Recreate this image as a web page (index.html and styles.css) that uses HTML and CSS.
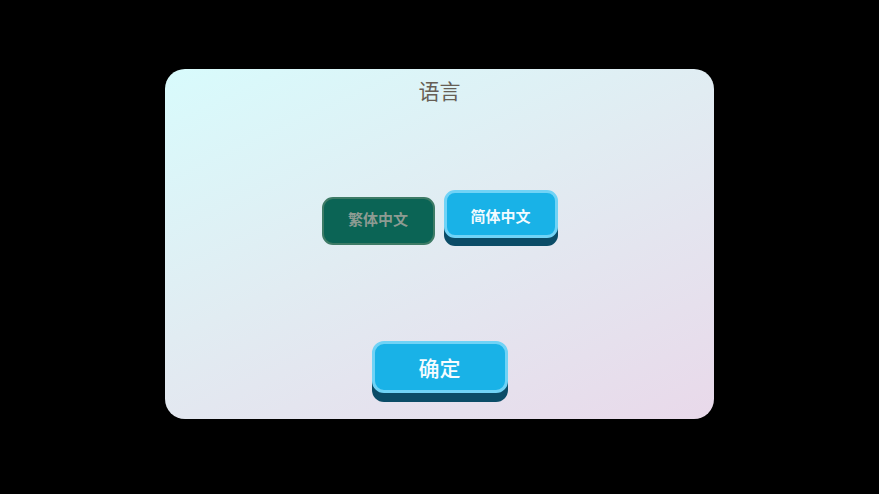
FILE: index.html
```html
<!DOCTYPE html>
<html lang="zh-CN">
<head>
<meta charset="utf-8">
<title>语言</title>
<link rel="stylesheet" href="styles.css">
</head>
<body>
<div class="panel">
  <div class="title">语言</div>
  <div class="lang-row">
    <button class="btn lang pressed">繁体中文</button>
    <button class="btn lang">简体中文</button>
  </div>
  <button class="btn confirm">确定</button>
</div>
</body>
</html>
```
FILE: styles.css
```css
html, body {
  margin: 0;
  padding: 0;
  background: #000;
  width: 879px;
  height: 494px;
  overflow: hidden;
  font-family: "Noto Sans CJK SC", "Noto Sans", sans-serif;
}
.panel {
  box-sizing: border-box;
  width: 549px;
  height: 350px;
  margin: 69px auto 0;
  border-radius: 20px;
  background: linear-gradient(155deg, #d8fbfc 0%, #e1ecf2 45%, #e9d9ea 100%);
  display: flex;
  flex-direction: column;
  align-items: center;
  padding-top: 7px;
}
.title {
  font-size: 21px;
  line-height: 28px;
  color: #675e55;
  font-weight: 400;
}
.lang-row {
  display: flex;
  gap: 9px;
  margin-top: 86px;
  align-items: flex-start;
}
.btn {
  box-sizing: border-box;
  font-family: inherit;
  font-weight: bold;
  border-style: solid;
  padding: 0;
  cursor: pointer;
}
.lang {
  width: 114px;
  height: 48px;
  border-radius: 11px;
  border-width: 3px;
  border-color: #70d3f6;
  background: #19b2e7;
  color: #f2fbff;
  font-size: 15px;
  padding-top: 4px;
  line-height: 36px;
  box-shadow: 0 8px 0 #0b4c67;
}
.lang.pressed {
  width: 113px;
  margin-top: 7px;
  border-width: 2px;
  border-color: #3e7b66;
  background: #0b6455;
  color: #8d9b92;
  box-shadow: none;
  padding-top: 0;
  padding-bottom: 5px;
  line-height: 39px;
}
.confirm {
  width: 136px;
  height: 52px;
  margin-top: 96px;
  border-radius: 12px;
  border-width: 3px;
  border-color: #70d3f6;
  background: #19b2e7;
  color: #f6fcff;
  font-size: 21px;
  font-weight: 500;
  line-height: 44px;
  box-shadow: 0 9px 0 #0b4c67;
}
```
